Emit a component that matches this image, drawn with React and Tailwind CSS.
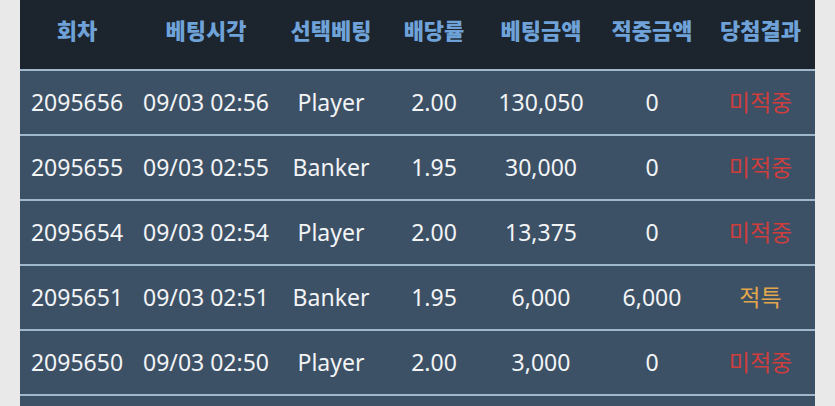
import React from "react";

const cols = [
	"w-[114px]",
	"w-[144px]",
	"w-[106px]",
	"w-[100px]",
	"w-[114px]",
	"w-[108px]",
	"w-[109px]",
];

const headers = ["회차", "베팅시각", "선택베팅", "배당률", "베팅금액", "적중금액", "당첨결과"];

const rows = [
	["2095656", "09/03 02:56", "Player", "2.00", "130,050", "0", "미적중"],
	["2095655", "09/03 02:55", "Banker", "1.95", "30,000", "0", "미적중"],
	["2095654", "09/03 02:54", "Player", "2.00", "13,375", "0", "미적중"],
	["2095651", "09/03 02:51", "Banker", "1.95", "6,000", "6,000", "적특"],
	["2095650", "09/03 02:50", "Player", "2.00", "3,000", "0", "미적중"],
];

const App = () => {
	return (
		<div
			className="w-[835px] h-[406px] overflow-hidden bg-[#e9e9e9] px-[20px]"
			style={{ fontFamily: '"Noto Sans", "Noto Sans CJK KR", sans-serif' }}
		>
			<div className="flex flex-col w-[795px]">
				<div className="flex h-[69px] bg-[#1c242d] pb-[11px]">
					{headers.map((h, i) => (
						<div
							key={h}
							className={`${cols[i]} flex items-center justify-center text-[22px] font-extrabold text-[#6fa2d8]`}
							style={{ fontFamily: '"Noto Sans CJK KR", sans-serif' }}
						>
							{h}
						</div>
					))}
				</div>
				{rows.map((r) => (
					<div
						key={r[0]}
						className="flex h-[65px] bg-[#3d5166] border-t-2 border-[#a0b8cc]"
					>
						{r.map((c, i) => (
							<div
								key={i}
								className={`${cols[i]} flex items-center justify-center text-[23px] ${
									i === 6
										? c === "적특"
											? "text-[#e2a64c] text-[21px]"
											: "text-[#cf3d3d] text-[21px]"
										: "text-[#f2f4f6]"
								}`}
							>
								{c}
							</div>
						))}
					</div>
				))}
				<div className="h-[65px] bg-[#3d5166] border-t-2 border-[#a0b8cc]" />
			</div>
		</div>
	);
};

export default App;
